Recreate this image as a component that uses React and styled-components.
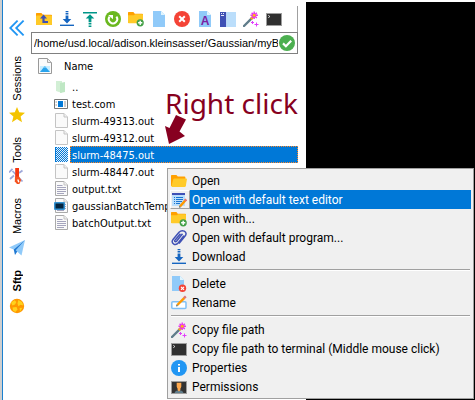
import React from "react";
import styled, { createGlobalStyle, css } from "styled-components";

const GlobalStyle = createGlobalStyle`
  *, *::before, *::after { box-sizing: border-box; }
  body { margin: 0; background: #fff; color: #000; overflow: hidden; }
  button { border: 0; padding: 0; margin: 0; background: none; color: inherit; font: inherit; text-align: left; }
`;

const listFont = css`
  font-family: "DejaVu Sans Condensed", "DejaVu Sans", sans-serif;
  font-size: 11px;
`;

/* ---------- icons ---------- */

const Svg = styled.svg`
  display: block;
  flex: none;
  width: 16px;
  height: 16px;
`;

const Icon = ({ children }) => (
  <Svg viewBox="0 0 16 16" aria-hidden="true">{children}</Svg>
);

const FolderShape = () => (
  <>
    <path d="M0 2.5Q0 2 .6 2H5.4L7 3.8H15.2Q16 3.8 16 4.6V13.2Q16 14 15.2 14H.8Q0 14 0 13.2Z" fill="#ffa000" />
    <path d="M0 5.4Q0 4.6 .8 4.6H15.2Q16 4.6 16 5.4V13.2Q16 14 15.2 14H.8Q0 14 0 13.2Z" fill="#ffca28" />
  </>
);

const FolderUpIcon = () => (
  <Icon>
    <FolderShape />
    <path d="M7.5 3.6 11 7.4H8.6V10H12V12H6.4V7.4H4Z" fill="#3f51b5" />
  </Icon>
);

const OpenFolderIcon = () => (
  <Icon>
    <path d="M0 2.6Q0 2 .8 2H5.4L6.8 3.6H13.4Q14.4 3.6 14.4 4.6V13H0Z" fill="#ffa000" />
    <path d="M3.4 5.6H15.2Q16.1 5.6 15.9 6.5L14.8 13Q14.6 14 13.6 14H1.2Q.2 14 .4 13L2.2 6.5Q2.5 5.6 3.4 5.6Z" fill="#ffca28" />
  </Icon>
);

const FolderAddIcon = () => (
  <Icon>
    <path d="M0 1.5Q0 1 .6 1H5.4L6.8 2.8H14.2Q15 2.8 15 3.6V12H0Z" fill="#ffa000" />
    <path d="M0 4.3 6 4.3 7 3.2H14.2Q15 3.2 15 4V12.2H.8Q0 12.2 0 11.4Z" fill="#ffca28" />
    <circle cx="12.2" cy="11.8" r="3.6" fill="#43a047" />
    <path d="M12.2 9.7V13.9M10.1 11.8H14.3" stroke="#fff" strokeWidth="1.4" />
  </Icon>
);

const DownloadIcon = () => (
  <Icon>
    <path d="M6.6 0H9.4V1.3H6.6ZM6.6 2H9.4V3.6H6.6ZM6.6 4.4H9.4V8H12.3L8 12.4 3.7 8H6.6Z" fill="#1565c0" />
    <path d="M1 13.6H15V15H1Z" fill="#1565c0" />
  </Icon>
);

const UploadIcon = () => (
  <Icon>
    <path d="M1 1H15V2.4H1ZM8 3.2 12.3 7.6H9.4V11.2H6.6V7.6H3.7ZM6.6 12H9.4V13.6H6.6ZM6.6 14.5H9.4V16H6.6Z" fill="#009688" />
  </Icon>
);

const RefreshIcon = () => (
  <Icon>
    <circle cx="8" cy="8" r="8" fill="#6ab81f" />
    <path d="M4.6 5.6A4.2 4.2 0 1 0 11.4 5.6" fill="none" stroke="#fff" strokeWidth="2" />
    <path d="M3.2 4H8V8.2Z" fill="#fff" />
  </Icon>
);

const PageShape = () => (
  <>
    <path d="M2 0H10L14 4V16H2Z" fill="#90caf9" />
    <path d="M10 0V4H14Z" fill="#e1f5fe" />
  </>
);

const PageIcon = () => <Icon><PageShape /></Icon>;

const IconLetter = styled.text`
  font: 700 12px "Liberation Sans", Arial, sans-serif;
  fill: #7b1fa2;
`;

const PageLetterIcon = () => (
  <Icon>
    <PageShape />
    <IconLetter x="8" y="14" textAnchor="middle">A</IconLetter>
  </Icon>
);

const CancelIcon = () => (
  <Icon>
    <circle cx="8" cy="8" r="8" fill="#f44336" />
    <path d="M5.2 5.2 10.8 10.8M10.8 5.2 5.2 10.8" stroke="#fff" strokeWidth="2" />
  </Icon>
);

const PanesIcon = () => (
  <Icon>
    <path d="M0 1H6.3V16H0Z" fill="#3f51b5" />
    <path d="M6.3 1H16V16H6.3Z" fill="#bbdefb" />
    <path d="M1 2H2V3H1ZM3 2H4V3H3ZM1 4H4V5H1Z" fill="#e8eaf6" />
  </Icon>
);

const WandIcon = () => (
  <Icon>
    <path d="M1 15 9.4 6.6" stroke="#607d8b" strokeWidth="2.4" strokeLinecap="round" />
    <path d="M8 8 10.4 5.6" stroke="#ffb300" strokeWidth="2.6" />
    <path d="M11.2 .6V8M7.5 4.3H14.9M8.6 1.7 13.8 6.9M13.8 1.7 8.6 6.9" stroke="#e632ee" strokeWidth="1.4" />
    <circle cx="11.2" cy="4.3" r="1.4" fill="#ffc107" />
    <path d="M13.5 11.5V15.5M11.5 13.5H15.5M9.5 10V13M8 11.5H11" stroke="#e040fb" strokeWidth="1" />
  </Icon>
);

const TerminalIcon = () => (
  <Icon>
    <path d="M0 2H16V15H0Z" fill="#9e9e9e" />
    <path d="M1 3H15V14H1Z" fill="#303030" />
    <path d="M2.3 4.3 3.9 5.5 2.3 6.7" fill="none" stroke="#eee" strokeWidth=".9" />
  </Icon>
);

const CheckIcon = () => (
  <Icon>
    <circle cx="8" cy="8" r="8" fill="#4caf50" />
    <path d="M4 8.4 6.9 11.2 12.2 5.8" fill="none" stroke="#fff" strokeWidth="2.2" />
  </Icon>
);

const PictureIcon = () => (
  <Icon>
    <path d="M1.5 .5H10.5L14.5 4.5V15.5H1.5Z" fill="#fbfbfb" stroke="#999" />
    <path d="M10.5 .8V4.5H14.3" fill="#eee" stroke="#aaa" />
    <path d="M3 8H13V14H3Z" fill="#c8edff" />
    <path d="M3 14 7.8 8 13 14Z" fill="#29a3ec" />
    <path d="M6.2 10 7.8 8 9.6 10 8 9.6Z" fill="#8ed7fb" />
  </Icon>
);

const CollapseIcon = () => (
  <Icon>
    <path d="M8.6 .6 1.2 8 8.6 15.4M14.6 .6 7.2 8 14.6 15.4" fill="none" stroke="#2196f3" strokeWidth="1.8" />
  </Icon>
);

const StarIcon = () => (
  <Icon>
    <path d="M8 0 10.2 5.3 16 5.7 11.6 9.5 13 15.2 8 12.1 3 15.2 4.4 9.5 0 5.7 5.8 5.3Z" fill="#f4c400" />
  </Icon>
);

const ToolsIcon = () => (
  <Icon>
    <path d="M0 4.5 3.5 .8M3.5 3 13.5 13.5M1 11 5 7.5M10 5 13.5 2.5" stroke="#9fa8da" strokeWidth="1.8" fill="none" />
    <path d="M6.2 0H10V9H6.2Z" fill="#f4360f" />
    <path d="M6 8.5H10L12.2 12 10.4 16H8L5.8 13.5Z" fill="#f4511e" />
    <path d="M8.8 11.5 9.8 14.2" stroke="#fff" strokeWidth="1.4" />
  </Icon>
);

const PlaneIcon = () => (
  <Icon>
    <path d="M16 0 0 7.5 4.7 9.4Z" fill="#90caf9" />
    <path d="M16 0 4.7 9.4 6 15Z" fill="#1e78d2" />
    <path d="M16 0 6.7 10.3 12.5 15.5Z" fill="#90caf9" />
  </Icon>
);

const GlobeIcon = () => (
  <Icon>
    <circle cx="8" cy="8" r="7.2" fill="#ff9800" />
    <path d="M2 4.5 5.5 2.2 7.4 4 6 6.4 3.4 7.6ZM9.3 2 13 4 14.4 7.6 11.5 6.8 9.4 8.3 8.5 5.4ZM3.5 9.6 7.5 9 8.6 11.4 6.3 14 4 12.4ZM10.6 10 13.4 9.8 11 13.8Z" fill="#ffd21c" />
  </Icon>
);

const ParentIcon = () => (
  <Icon>
    <path d="M2 2H8V14L2 12Z" fill="#d2efd5" />
    <path d="M6 4 11 3V13L6 14Z" fill="#bfe7c4" />
  </Icon>
);

const ProgramIcon = () => (
  <Icon>
    <path d="M.5 3.5H13.5V12.5H.5Z" fill="#fff" stroke="#777" />
    <path d="M4 5H9V11H4Z" fill="#0078d7" />
    <path d="M1.5 6H3M1.5 9H3M11 5V11" stroke="#999" />
  </Icon>
);

const BlankIcon = ({ lines = false, badge = false }) => (
  <Icon>
    <path d="M1.5 .5H10L13.5 4V14.5H1.5Z" fill="#fafafa" stroke={lines ? "#aaa" : "#c4c4c4"} />
    <path d="M10 .5V4H13.5" fill="#f1f1f1" stroke="#c4c4c4" />
    {lines && <path d="M3 4.5H8.5M3 6.5H12M3 8.5H12M3 10.5H12M3 12.5H10" stroke="#a5a5bd" />}
    {badge && (
      <>
        <rect x="0" y="4" width="11" height="8" rx="1" fill="#3593d3" />
        <path d="M1.5 5.5H9.5V10.5H1.5Z" fill="#04243d" />
      </>
    )}
  </Icon>
);

const SelectedFileIcon = () => (
  <Icon>
    <path d="M1 0H11L14 3V15H1Z" fill="#e3effa" />
    <path
      d={Array.from({ length: 15 }, (_, y) =>
        Array.from({ length: 7 }, (_, i) => `M${1 + i * 2 - (y % 2 ? 0 : 1) + (i === 0 && y % 2 === 0 ? 1 : 0)} ${y}h1v1h-1z`).join("")
      ).join("")}
      fill="#0078d7"
      shapeRendering="crispEdges"
    />
  </Icon>
);

const EditorIcon = () => (
  <Icon>
    <path d="M1 1H14V14H1Z" fill="#bbdefb" />
    <path d="M1 1H14V3H1Z" fill="#3f51b5" />
    <path d="M3 5.5H4M5 5.5H12M3 7.5H4M5 7.5H12M3 9.5H4M5 9.5H11M3 11.5H4M5 11.5H9" stroke="#1976d2" />
    <path d="M9 14.6 14.2 8.4" stroke="#ff9800" strokeWidth="2.4" />
    <path d="M13.8 8.9 15.2 7.3" stroke="#e57373" strokeWidth="2.4" />
    <path d="M8 15.8 8.2 13.7 10 15.2Z" fill="#546e7a" />
  </Icon>
);

const ClipIcon = () => (
  <Icon>
    <path d="M12.9 5.6 7.4 12.8Q5 15.7 2.5 13.9 0 12 2.2 9.2L8 2.2Q10.2 .2 13.2 1.1 16.5 3 13.9 6.2L8 13.6M11.5 3.8 5.6 11.2Q4.5 12.2 3.9 11.4 3.4 10.9 4.2 9.9L9.4 3.7" fill="none" stroke="#3f51b5" strokeWidth="1.5" />
  </Icon>
);

const DeleteIcon = () => (
  <Icon>
    <path d="M1 0H9L13 4V15H1Z" fill="#90caf9" />
    <path d="M9 0V4H13Z" fill="#e1f5fe" />
    <circle cx="11.5" cy="12.3" r="3.7" fill="#f44336" />
    <path d="M10 10.8 13 13.8M13 10.8 10 13.8" stroke="#fff" strokeWidth="1.2" />
  </Icon>
);

const RenameIcon = () => (
  <Icon>
    <rect x=".8" y="6.8" width="14.2" height="6.6" rx="1" fill="#fff" stroke="#7fbff5" strokeWidth="1.5" />
    <path d="M6.3 10 13.4 2.8" stroke="#ff9800" strokeWidth="2.4" />
    <path d="M13 3.2 14.8 1.4" stroke="#d9777b" strokeWidth="2.4" />
    <path d="M5 11.4 5.5 9.2 7.2 10.9Z" fill="#546e7a" />
  </Icon>
);

const InfoIcon = () => (
  <Icon>
    <circle cx="8" cy="8" r="8" fill="#2196f3" />
    <path d="M7 4H9V5.6H7ZM7 7H9V12H7Z" fill="#fff" />
  </Icon>
);

const UserIcon = () => (
  <Icon>
    <path d="M0 2H16V15H0Z" fill="#9e9e9e" />
    <path d="M1 3H15V14H1Z" fill="#333" />
    <path d="M3.6 14Q4 11.5 8 11.2 12 11.5 12.4 14Z" fill="#607d8b" />
    <path d="M5.7 3.8H10.3V7.4Q9.8 9.2 9.4 9.5V11L8 12.4 6.6 11V9.5Q6.2 9.2 5.7 7.4Z" fill="#ffa94d" />
  </Icon>
);

/* ---------- layout ---------- */

const Window = styled.div`
  position: relative;
  display: grid;
  grid-template-columns: 28px minmax(0, 276fr) minmax(0, 169fr);
  min-height: 100vh;
  border-left: 2px solid #cfcfcf;
  overflow: hidden;
`;

const Sidebar = styled.nav`
  display: flex;
  flex-direction: column;
  align-items: center;
  padding-top: 20px;
  border-left: 1px solid #1b80cf;
  font: 11px "Liberation Sans", Arial, sans-serif;
`;

const Collapse = styled.button`
  margin-bottom: 20px;
`;

const SideTab = styled.button`
  display: flex;
  flex-direction: column;
  align-items: center;
  gap: 6px;
  margin-bottom: 14px;
  font-weight: ${(p) => (p.$active ? 700 : 400)};
`;

const SideLabel = styled.span`
  writing-mode: vertical-rl;
  transform: rotate(180deg);
  line-height: 16px;
`;

const Browser = styled.main`
  display: flex;
  flex-direction: column;
  padding: 6px 8px 0 1px;
  min-width: 0;
`;

const Toolbar = styled.div`
  display: flex;
  align-items: center;
  gap: 7px;
  height: 26px;
  padding-left: 5px;
  border-right: 1px solid #a0a0a0;
`;

const PathBar = styled.div`
  display: flex;
  align-items: center;
  gap: 1px;
  height: 22px;
  padding: 0 2px;
  border: 1px solid #808080;
`;

const PathInput = styled.input`
  flex: 1;
  min-width: 0;
  border: 0;
  padding: 0;
  outline: 0;
  background: #fff;
  font: 11px "Liberation Sans", Arial, sans-serif;
`;

const Files = styled.table`
  ${listFont}
  width: 100%;
  border-collapse: collapse;
  table-layout: fixed;

  th, td { padding: 0; font-weight: 400; text-align: left; white-space: nowrap; }
  thead tr { height: 24px; }
`;

const IconCol = styled.col`
  width: 39px;
`;

const HeadIcon = styled.th`
  svg { margin-left: 6px; }
`;

const HeadName = styled.th`
  > span { margin-left: -6px; }
`;

const FileRow = styled.tr`
  height: 17px;
`;

const FileIconCell = styled.td`
  svg { margin-left: 23px; }
`;

const FileName = styled.td`
  color: ${(p) => (p.$selected ? "#fff" : "#000")};

  > span {
    display: block;
    padding: 2px 0 0 1px;
    line-height: 13px;
    border: 1px dotted ${(p) => (p.$selected ? "#ff8728" : "transparent")};
    background: ${(p) => (p.$selected ? "#0078d7" : "transparent")};
  }
`;

const Terminal = styled.section`
  margin-top: 2px;
  background: #000;
`;

const Callout = styled.div`
  position: absolute;
  left: 163px;
  top: 81px;
  color: #870020;
  font: 28px/44px "Noto Sans", "Open Sans", sans-serif;
  white-space: nowrap;

  svg { display: block; width: 24px; height: 32px; margin-top: -11px; }
`;

const Menu = styled.div`
  position: absolute;
  left: 165px;
  top: 168px;
  width: 307px;
  padding: 2px;
  background: #f0f0f0;
  border: 1px solid #a0a0a0;
  font: 12px Roboto, "Noto Sans", sans-serif;
`;

const MenuItem = styled.button`
  display: grid;
  grid-template-columns: 20px 1fr;
  width: 100%;
  height: 19px;
  line-height: 18px;
`;

const MenuIcon = styled.span`
  display: flex;
  align-items: center;
  border: 1px solid transparent;
  border-color: ${(p) => (p.$active ? "#fff #a0a0a0 #a0a0a0 #fff" : "transparent")};
`;

const MenuLabel = styled.span`
  padding: 1px 0 0 2px;
  color: ${(p) => (p.$active ? "#fff" : "#000")};
  background: ${(p) => (p.$active ? "#0078d7" : "transparent")};
`;

const Separator = styled.hr`
  height: 2px;
  margin: 3px 1px;
  border: 0;
  border-top: 1px solid #a0a0a0;
  border-bottom: 1px solid #fff;
`;

/* ---------- data ---------- */

const tabs = [
  ["Sessions", StarIcon],
  ["Tools", ToolsIcon],
  ["Macros", PlaneIcon],
  ["Sftp", GlobeIcon],
];

const tools = [
  ["Parent folder", FolderUpIcon],
  ["Download", DownloadIcon],
  ["Upload", UploadIcon],
  ["Refresh", RefreshIcon],
  ["New folder", FolderAddIcon],
  ["New file", PageIcon],
  ["Delete", CancelIcon],
  ["Text mode", PageLetterIcon],
  ["Toggle panes", PanesIcon],
  ["Copy path", WandIcon],
  ["Open terminal", TerminalIcon],
];

const files = [
  ["..", <ParentIcon />],
  ["test.com", <ProgramIcon />],
  ["slurm-49313.out", <BlankIcon />],
  ["slurm-49312.out", <BlankIcon />],
  ["slurm-48475.out", <SelectedFileIcon />],
  ["slurm-48447.out", <BlankIcon />],
  ["output.txt", <BlankIcon lines />],
  ["gaussianBatchTemplate", <BlankIcon lines badge />],
  ["batchOutput.txt", <BlankIcon lines />],
];

const menuGroups = [
  [
    ["Open", OpenFolderIcon],
    ["Open with default text editor", EditorIcon],
    ["Open with...", FolderAddIcon],
    ["Open with default program...", ClipIcon],
    ["Download", DownloadIcon],
  ],
  [
    ["Delete", DeleteIcon],
    ["Rename", RenameIcon],
  ],
  [
    ["Copy file path", WandIcon],
    ["Copy file path to terminal (Middle mouse click)", TerminalIcon],
    ["Properties", InfoIcon],
    ["Permissions", UserIcon],
  ],
];

const selectedFile = "slurm-48475.out";
const activeItem = "Open with default text editor";

export default function App() {
  return (
    <>
      <GlobalStyle />
      <Window>
        <Sidebar>
          <Collapse aria-label="Collapse sidebar"><CollapseIcon /></Collapse>
          {tabs.map(([label, TabIcon]) => (
            <SideTab key={label} $active={label === "Sftp"}>
              <SideLabel>{label}</SideLabel>
              <TabIcon />
            </SideTab>
          ))}
        </Sidebar>

        <Browser>
          <Toolbar role="toolbar">
            {tools.map(([label, ToolIcon]) => (
              <button key={label} aria-label={label}><ToolIcon /></button>
            ))}
          </Toolbar>
          <PathBar>
            <PathInput
              aria-label="Remote path"
              readOnly
              value="/home/usd.local/adison.kleinsasser/Gaussian/myBatch"
            />
            <CheckIcon />
          </PathBar>
          <Files>
            <colgroup><IconCol /><col /></colgroup>
            <thead>
              <tr>
                <HeadIcon><PictureIcon /></HeadIcon>
                <HeadName><span>Name</span></HeadName>
              </tr>
            </thead>
            <tbody>
              {files.map(([name, icon]) => (
                <FileRow key={name} aria-selected={name === selectedFile}>
                  <FileIconCell>{icon}</FileIconCell>
                  <FileName $selected={name === selectedFile}><span>{name}</span></FileName>
                </FileRow>
              ))}
            </tbody>
          </Files>
        </Browser>

        <Terminal aria-label="Terminal" />

        <Callout>
          Right click
          <svg viewBox="0 0 24 32" aria-hidden="true">
            <path d="M11 1 21 5.5 14.5 17.5 20 22 4 30 0 12 4.5 14Z" fill="#870020" />
          </svg>
        </Callout>

        <Menu role="menu">
          {menuGroups.map((group, i) => (
            <React.Fragment key={group[0][0]}>
              {i > 0 && <Separator />}
              {group.map(([label, ItemIcon]) => (
                <MenuItem key={label} role="menuitem">
                  <MenuIcon $active={label === activeItem}><ItemIcon /></MenuIcon>
                  <MenuLabel $active={label === activeItem}>{label}</MenuLabel>
                </MenuItem>
              ))}
            </React.Fragment>
          ))}
        </Menu>
      </Window>
    </>
  );
}
